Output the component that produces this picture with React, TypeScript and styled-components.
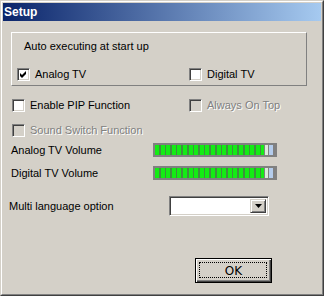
import React from "react";
import styled, { createGlobalStyle } from "styled-components";

const Global = createGlobalStyle`
  html, body { margin: 0; padding: 0; background: #d4d0c8; }
  body { font-family: "Liberation Sans", Arial, sans-serif; font-size: 11px; color: #000; }
`;

const Frame = styled.div`
  width: 324px;
  height: 296px;
  box-sizing: border-box;
  border: 1px solid;
  border-color: #d4d0c8 #404040 #404040 #d4d0c8;
  background: #d4d0c8;
`;

const FrameInner = styled.div`
  height: 100%;
  box-sizing: border-box;
  border: 1px solid;
  border-color: #fff #808080 #808080 #fff;
  padding: 1px;
  display: flex;
  flex-direction: column;
`;

const TitleBar = styled.div`
  height: 18px;
  flex: none;
  background: linear-gradient(to right, #0a246a, #a6caf0);
  color: #fff;
  font-weight: bold;
  font-size: 12px;
  display: flex;
  align-items: center;
  padding-left: 1px;
`;

const Content = styled.div`
  display: flex;
  flex-direction: column;
  padding: 11px 0 0 8px;
`;

const GroupBox = styled.div`
  width: 296px;
  height: 54px;
  box-sizing: border-box;
  border: 1px solid;
  border-color: #fff #808080 #808080 #fff;
  padding: 7px 0 0 5px;
  display: flex;
  flex-direction: column;
`;

const Caption = styled.div`
  line-height: 13px;
  padding-left: 7px;
`;

const CheckRow = styled.div<{ $top: number; $left: number; $col: number }>`
  display: grid;
  grid-template-columns: ${(p) => p.$col}px auto;
  margin-top: ${(p) => p.$top}px;
  margin-left: ${(p) => p.$left}px;
  height: 13px;
`;

const CheckLabel = styled.label<{ $disabled?: boolean }>`
  display: flex;
  align-items: center;
  gap: 5px;
  line-height: 13px;
  white-space: nowrap;
  color: ${(p) => (p.$disabled ? "#808080" : "#000")};
  text-shadow: ${(p) => (p.$disabled ? "1px 1px 0 #fff" : "none")};
`;

const Box = styled.span<{ $disabled?: boolean }>`
  width: 13px;
  height: 13px;
  box-sizing: border-box;
  flex: none;
  border: 1px solid;
  border-color: #808080 #fff #fff #808080;
  box-shadow: inset 1px 1px 0 #404040, inset -1px -1px 0 #d4d0c8;
  background: ${(p) => (p.$disabled ? "#d4d0c8" : "#fff")};
  display: flex;
  align-items: center;
  justify-content: center;
`;

const CheckBox = ({ label, checked, disabled }: { label: string; checked?: boolean; disabled?: boolean }) => (
  <CheckLabel $disabled={disabled}>
    <Box $disabled={disabled}>
      {checked && (
        <svg width="7" height="7" viewBox="0 0 7 7">
          <path d="M0 2 L2 4 L6 0 L6 3 L2 7 L0 5 Z" fill="#000" />
        </svg>
      )}
    </Box>
    {label}
  </CheckLabel>
);

const FieldRow = styled.div<{ $top: number; $left: number; $col: number; $h: number }>`
  display: grid;
  grid-template-columns: ${(p) => p.$col}px auto;
  align-items: center;
  margin-top: ${(p) => p.$top}px;
  margin-left: ${(p) => p.$left}px;
  height: ${(p) => p.$h}px;
  line-height: 13px;
`;

const Slider = styled.div`
  width: 124px;
  height: 14px;
  box-sizing: border-box;
  background: #808080;
  padding: 2px;
  display: flex;
  gap: 1px;
`;

const Track = styled.div`
  flex: 1;
  background: repeating-linear-gradient(
    to right,
    #14ec14 0px,
    #14ec14 4px,
    #3f8f3f 4px,
    #3f8f3f 5.6px
  );
`;

const Thumb = styled.div`
  width: 9px;
  display: flex;
  gap: 1px;
  margin-right: 1px;
`;

const ThumbPart = styled.div<{ $c: string; $w: number }>`
  width: ${(p) => p.$w}px;
  background: ${(p) => p.$c};
`;

const VolumeSlider = () => (
  <Slider>
    <Track />
    <Thumb>
      <ThumbPart $c="#d8ecd8" $w={3} />
      <ThumbPart $c="#b4ccec" $w={4} />
    </Thumb>
  </Slider>
);

const Combo = styled.div`
  width: 100px;
  height: 20px;
  box-sizing: border-box;
  border: 1px solid;
  border-color: #808080 #fff #fff #808080;
  box-shadow: inset 1px 1px 0 #404040, inset -1px -1px 0 #d4d0c8;
  background: #fff;
  display: flex;
  justify-content: flex-end;
  padding: 2px;
`;

const DropButton = styled.div`
  width: 16px;
  height: 100%;
  box-sizing: border-box;
  background: #d4d0c8;
  border: 1px solid;
  border-color: #d4d0c8 #404040 #404040 #d4d0c8;
  box-shadow: inset 1px 1px 0 #fff, inset -1px -1px 0 #808080;
  display: flex;
  align-items: center;
  justify-content: center;
`;

const Footer = styled.div`
  display: flex;
  margin-top: 42px;
  padding-left: 184px;
`;

const Button = styled.button`
  width: 77px;
  height: 25px;
  box-sizing: border-box;
  padding: 0;
  border: 1px solid #000;
  background: #d4d0c8;
  box-shadow: inset 1px 1px 0 #fff, inset -1px -1px 0 #404040, inset -2px -2px 0 #808080;
  font-family: "DejaVu Sans", "Liberation Sans", sans-serif;
  font-size: 12px;
  color: #000;
  display: flex;
  align-items: center;
  justify-content: center;
  position: relative;
`;

const FocusRing = styled.span`
  position: absolute;
  inset: 3px 4px 4px 3px;
  border: 1px dotted #000;
`;

export default function App() {
  return (
    <>
      <Global />
      <Frame>
        <FrameInner>
          <TitleBar>Setup</TitleBar>
          <Content>
            <GroupBox>
              <Caption>Auto executing at start up</Caption>
              <CheckRow $top={15} $left={0} $col={172}>
                <CheckBox label="Analog TV" checked />
                <CheckBox label="Digital TV" />
              </CheckRow>
            </GroupBox>
            <CheckRow $top={13} $left={1} $col={177}>
              <CheckBox label="Enable PIP Function" />
              <CheckBox label="Always On Top" disabled />
            </CheckRow>
            <CheckRow $top={12} $left={1} $col={177}>
              <CheckBox label="Sound Switch Function" disabled />
            </CheckRow>
            <FieldRow $top={6} $left={0} $col={142} $h={14}>
              <span>Analog TV Volume</span>
              <VolumeSlider />
            </FieldRow>
            <FieldRow $top={9} $left={0} $col={142} $h={14}>
              <span>Digital TV Volume</span>
              <VolumeSlider />
            </FieldRow>
            <FieldRow $top={16} $left={-2} $col={160} $h={20}>
              <span>Multi language option</span>
              <Combo>
                <DropButton>
                  <svg width="7" height="4" viewBox="0 0 7 4">
                    <path d="M0 0 H7 L3.5 4 Z" fill="#000" />
                  </svg>
                </DropButton>
              </Combo>
            </FieldRow>
            <Footer>
              <Button>
                <FocusRing />
                OK
              </Button>
            </Footer>
          </Content>
        </FrameInner>
      </Frame>
    </>
  );
}
